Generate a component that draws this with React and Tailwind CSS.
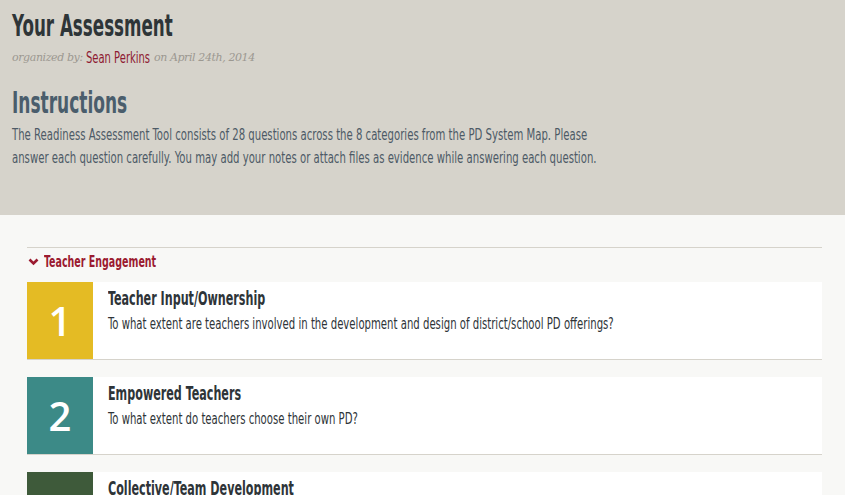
import React from "react";

const cond = { fontFamily: '"DejaVu Sans Condensed", "DejaVu Sans", sans-serif' };

// Yanone-like narrow text: condensed face squeezed horizontally
function Narrow({ className = "", children }) {
  return (
    <span style={cond} className={`inline-block origin-left whitespace-nowrap ${className}`}>
      {children}
    </span>
  );
}

const questions = [
  { n: 1, color: "bg-[#e4bb24]", title: "Teacher Input/Ownership", text: "To what extent are teachers involved in the development and design of district/school PD offerings?" },
  { n: 2, color: "bg-[#3c8a87]", title: "Empowered Teachers", text: "To what extent do teachers choose their own PD?" },
  { n: 3, color: "bg-[#3e5a3a]", title: "Collective/Team Development", text: "To what extent do teachers engage in collaborative professional learning?" },
];

function QuestionCard({ q }) {
  return (
    <div className="flex h-[78px] bg-white border-b border-[#d6d3cb]">
      <div className={`w-[66px] shrink-0 flex items-center justify-center ${q.color}`}>
        <span className="text-white text-[40px] leading-none font-semibold font-['Open_Sans',sans-serif]">{q.n}</span>
      </div>
      <div className="pl-[15px] pt-[4px] flex flex-col">
        <Narrow className="text-[20px] font-bold text-[#2e3438] leading-[24px] scale-x-[0.62]">{q.title}</Narrow>
        <Narrow className="text-[15px] text-[#2e3438] leading-[20px] mt-[4px] scale-x-[0.75]">{q.text}</Narrow>
      </div>
    </div>
  );
}

export default function App() {
  return (
    <div className="w-[845px] h-[495px] overflow-hidden bg-[#f8f8f6]">
      <div className="h-[215px] bg-[#d6d3cb] px-3 pt-[6px] flex flex-col items-start">
        <Narrow className="text-[31px] font-bold text-[#2e3538] leading-[38px] scale-x-[0.6]">Your Assessment</Narrow>
        <p className="text-[11px] italic text-[#9c9891] mt-[5px] font-['DejaVu_Serif',serif] tracking-[-0.4px] leading-[18px] whitespace-nowrap">
          organized by:{" "}
          <Narrow className="not-italic text-[15px] text-[#8e1a32] tracking-normal scale-x-[0.74] w-[65px] align-bottom">Sean Perkins</Narrow>
          {" "}on April 24th, 2014
        </p>
        <Narrow className="text-[31px] font-bold text-[#4a5d6c] leading-[38px] mt-[16px] scale-x-[0.61]">Instructions</Narrow>
        <Narrow className="text-[15px] text-[#4d5a66] leading-[23px] mt-[3px] scale-x-[0.75]">
          The Readiness Assessment Tool consists of 28 questions across the 8 categories from the PD System Map. Please
        </Narrow>
        <Narrow className="text-[15px] text-[#4d5a66] leading-[23px] scale-x-[0.75]">
          answer each question carefully. You may add your notes or attach files as evidence while answering each question.
        </Narrow>
      </div>
      <div className="px-[27px] pt-8">
        <div className="border-t border-[#d6d3cb] w-[795px]">
          <div className="flex items-center h-[28px] gap-[5px]">
            <svg width="11" height="8" viewBox="0 0 11 8" className="text-[#9b1b30] ml-[1px]">
              <path d="M1.5 1.5 L5.5 5.5 L9.5 1.5" stroke="currentColor" strokeWidth="2.6" fill="none" />
            </svg>
            <Narrow className="text-[16px] font-bold text-[#9b1b30] scale-x-[0.66]">Teacher Engagement</Narrow>
          </div>
          <div className="flex flex-col gap-[17px] mt-[6px]">
            {questions.map((q) => (
              <QuestionCard key={q.n} q={q} />
            ))}
          </div>
        </div>
      </div>
    </div>
  );
}
